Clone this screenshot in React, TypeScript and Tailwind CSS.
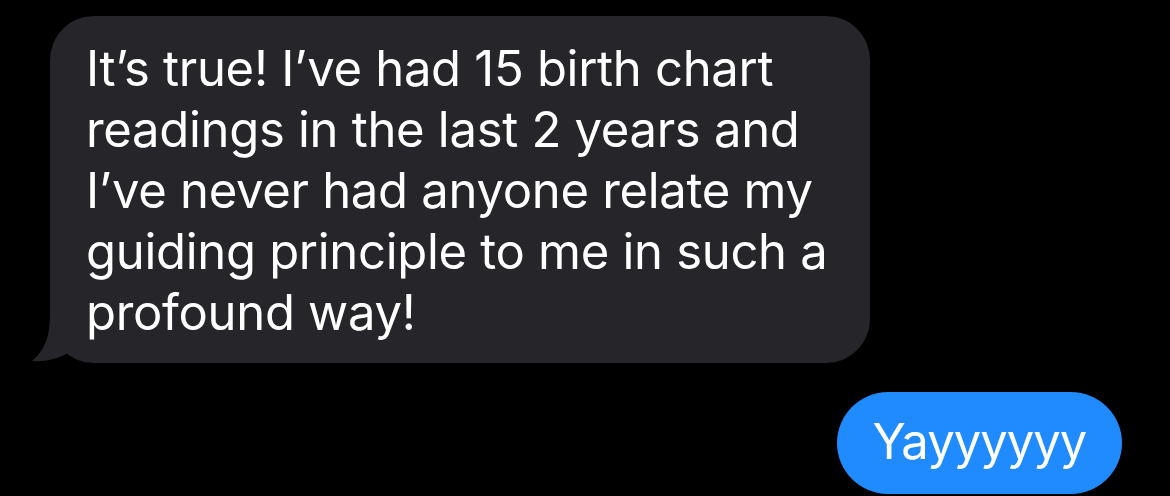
export default function App() {
  return (
    <div className="w-[1170px] h-[496px] bg-black overflow-hidden flex flex-col" style={{ fontFamily: "Inter, 'Noto Sans', sans-serif" }}>
      <div className="pl-[50px] pt-[16px]">
        <div className="relative w-[820px] h-[347px]">
          <svg className="absolute left-[-18px] bottom-0" width="60" height="50" viewBox="0 0 60 50">
            <path d="M18 0 C18 22 14 36 0 48 C12 49 26 46 36 40 L60 40 L60 0 Z" fill="#26252a" />
          </svg>
          <div className="relative h-full bg-[#26252a] rounded-[44px] pl-[36px] pt-[22px] text-white text-[49px] leading-[61px] tracking-[-0.3px]">
            It’s true! I’ve had 15 birth chart
            <br />
            readings in the last 2 years and
            <br />
            I’ve never had anyone relate my
            <br />
            guiding principle to me in such a
            <br />
            profound way!
          </div>
        </div>
      </div>
      <div className="flex justify-end pr-[48px] pt-[29px]">
        <div className="w-[285px] h-[102px] rounded-full bg-[#1f8bff] text-white text-[49px] flex items-center justify-center tracking-[-1px] pb-[2px]">
          Yayyyyyy
        </div>
      </div>
    </div>
  );
}
